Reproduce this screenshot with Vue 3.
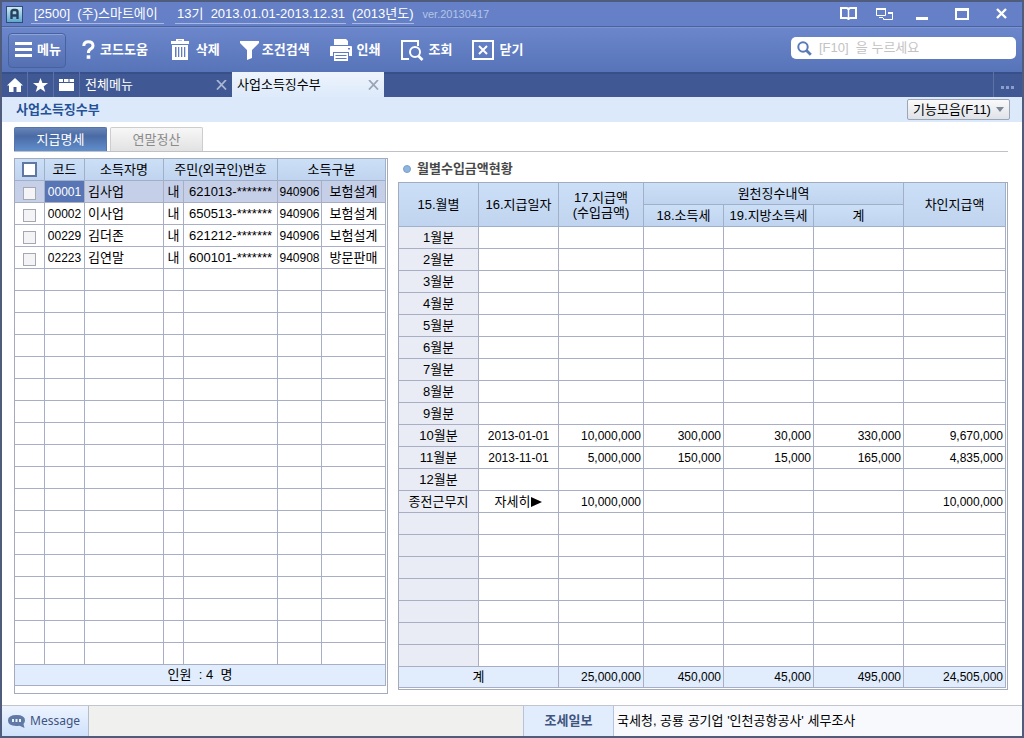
<script setup>
import { ref } from 'vue'

const keyword = ref('')
const allChecked = ref(false)

const people = ref([
  { code: '00001', name: '김사업', kind: '내', id: '621013-*******', type: '940906', label: '보험설계', checked: false },
  { code: '00002', name: '이사업', kind: '내', id: '650513-*******', type: '940906', label: '보험설계', checked: false },
  { code: '00229', name: '김더존', kind: '내', id: '621212-*******', type: '940906', label: '보험설계', checked: false },
  { code: '02223', name: '김연말', kind: '내', id: '600101-*******', type: '940908', label: '방문판매', checked: false },
])
const selected = ref('00001')
const emptyPeople = 18

const months = Array.from({ length: 9 }, (_, i) => ({ month: `${i + 1}월분`, date: '', values: ['', '', '', '', ''] }))
const payments = [
  ...months,
  { month: '10월분', date: '2013-01-01', values: ['10,000,000', '300,000', '30,000', '330,000', '9,670,000'] },
  { month: '11월분', date: '2013-11-01', values: ['5,000,000', '150,000', '15,000', '165,000', '4,835,000'] },
  { month: '12월분', date: '', values: ['', '', '', '', ''] },
  { month: '종전근무지', date: '', more: '자세히', values: ['10,000,000', '', '', '', '10,000,000'] },
  ...Array.from({ length: 7 }, () => ({ month: '', date: '', values: ['', '', '', '', ''] })),
]
const totals = ['25,000,000', '450,000', '45,000', '495,000', '24,505,000']
</script>

<template>
  <div class="window">
    <header class="titlebar">
      <svg class="app-icon" width="17" height="17" viewBox="0 0 17 17">
        <defs>
          <linearGradient id="appg" x1="0" y1="0" x2="0" y2="1">
            <stop offset="0" stop-color="#d3edf5" /><stop offset="1" stop-color="#5aa5cc" />
          </linearGradient>
        </defs>
        <rect x=".5" y=".5" width="16" height="16" fill="url(#appg)" stroke="#304c78" />
        <path d="M5.5 13V6q0-2 2-2h2q2 0 2 2v7M5.5 9.5h6" fill="none" stroke="#26405e" stroke-width="2.4" />
      </svg>
      <span class="title-text company">[2500]&nbsp; (주)스마트에이</span>
      <span class="title-text period">13기&nbsp; 2013.01.01-2013.12.31</span>
      <span class="title-text year">(2013년도)</span>
      <span class="version">ver.20130417</span>
      <div class="controls">
        <button type="button" aria-label="도움말">
          <svg width="17" height="14" viewBox="0 0 17 14" fill="none" stroke="#fff" stroke-width="2"><path d="M1 1h5.500Q8.500 1 8.500 3q0-2 2-2H16v10h-5.500q-2 0-2 1.500 0-1.500-2-1.500H1z" /><path d="M8.500 2v11" stroke-width="1.500" /></svg>
        </button>
        <button type="button" aria-label="창 배열">
          <svg width="17" height="13" viewBox="0 0 17 13" fill="none" stroke="#fff"><path d="M.5 1v6.500h9V1M3 9.500h4M12 5h4.500v6.500h-9V10" /><path d="M0 1h10M12 5h5" stroke-width="2" /></svg>
        </button>
        <button type="button" aria-label="최소화">
          <svg width="12" height="14" viewBox="0 0 12 14"><path d="M0 10h12v3H0z" fill="#fff" /></svg>
        </button>
        <button type="button" aria-label="최대화">
          <svg width="14" height="13" viewBox="0 0 14 13"><path d="M0 0h14v12H0zM2 3v7h10V3z" fill="#fff" fill-rule="evenodd" /></svg>
        </button>
        <button type="button" aria-label="창 닫기">
          <svg width="11" height="12" viewBox="0 0 11 12"><path d="M1 1l9 9M10 1l-9 9" stroke="#fff" stroke-width="2.400" /></svg>
        </button>
      </div>
    </header>

    <div class="toolbar">
      <button type="button" class="tool menu">
        <svg width="17" height="16" viewBox="0 0 17 16" fill="#fff"><path d="M0 0h17v3H0zM0 6h17v3H0zM0 12h17v3H0z" /></svg>메뉴
      </button>
      <button type="button" class="tool help">
        <svg width="13" height="21" viewBox="0 0 13 21" fill="none"><path d="M1.800 6Q1.800 1.800 6.300 1.800T11 5.600Q11 8 8.500 9.200 6.400 10.300 6.400 13" stroke="#fff" stroke-width="3" /><path d="M4.700 15.300h3.600v3.500H4.700z" fill="#fff" /></svg>코드도움
      </button>
      <button type="button" class="tool wide">
        <svg width="18" height="22" viewBox="0 0 18 22"><path d="M0 2h5V0h8v2h5v3H0zM7 1.500V2h4v-.5zM1 6h16v15H1zM4 8v10h1.500V8zM7 8v10h1.300V8zM10 8v10h1.300V8zM13 8v10h1.300V8z" fill="#fff" fill-rule="evenodd" /></svg>삭제
      </button>
      <button type="button" class="tool tight">
        <svg width="19" height="19" viewBox="0 0 19 19"><path d="M0 0h19v2l-7 7v8l-5 2V9L0 2z" fill="#fff" /></svg>조건검색
      </button>
      <button type="button" class="tool">
        <svg width="22" height="23" viewBox="0 0 22 23"><path d="M4 0h12l2 2v4H4zM0 8q0-1 1-1h20q1 0 1 1v9h-3v-4H3v4H0zM18 9h2v1.500h-2zM4 14h14v8H4zM5.500 16v1h11v-1zM5.500 19v1h11v-1z" fill="#fff" fill-rule="evenodd" /></svg>인쇄
      </button>
      <button type="button" class="tool">
        <svg width="23" height="21" viewBox="0 0 23 21" fill="none" stroke="#fff" stroke-width="2"><path d="M8 19H1V1h16v5" /><circle cx="14" cy="12" r="5" /><path d="M17.500 16l4 4" stroke-width="2.600" /></svg>조회
      </button>
      <button type="button" class="tool">
        <svg width="22" height="21" viewBox="0 0 22 21" fill="none" stroke="#fff" stroke-width="2"><path d="M1 1h20v18H1zM7 6l8 8M15 6l-8 8" /></svg>닫기
      </button>
      <label class="search">
        <svg width="15" height="15" viewBox="0 0 15 15" fill="none" stroke="#587bb8"><circle cx="6" cy="6" r="4.700" stroke-width="2" /><path d="M9.500 9.500l4.300 4.300" stroke-width="2.800" /></svg>
        <input v-model="keyword" type="text" placeholder="[F10]  을 누르세요" aria-label="검색" />
      </label>
    </div>

    <nav class="tabs">
      <button type="button" class="mini" aria-label="홈"><svg width="16" height="14" viewBox="0 0 16 14"><path d="M8 0l8 7.500h-2V14h-4.500V9h-3v5H2V7.500H0z" fill="#fff" /></svg></button>
      <button type="button" class="mini" aria-label="즐겨찾기"><svg width="15" height="14" viewBox="0 0 15 14"><path d="M7.500 0l1.900 5H15l-4.400 3.400L12.300 14 7.500 10.700 2.700 14l1.700-5.600L0 5h5.600z" fill="#fff" /></svg></button>
      <button type="button" class="mini" aria-label="메뉴함"><svg width="15" height="13" viewBox="0 0 15 13"><path d="M0 1h4v3H0zM5 1h4.500v3H5zM10.500 1H15v3h-4.500zM0 5h15v8H0z" fill="#fff" /></svg></button>
      <div class="tab">
        <a href="#all">전체메뉴</a>
        <button type="button" aria-label="전체메뉴 닫기"><svg width="11" height="10" viewBox="0 0 11 10"><path d="M1 0l9 9.500M10 0L1 9.500" stroke="#a9b6d4" stroke-width="1.800" /></svg></button>
      </div>
      <div class="tab current">
        <a href="#income">사업소득징수부</a>
        <button type="button" aria-label="사업소득징수부 닫기"><svg width="11" height="10" viewBox="0 0 11 10"><path d="M1 0l9 9.500M10 0L1 9.500" stroke="#98a3b3" stroke-width="1.800" /></svg></button>
      </div>
      <button type="button" class="more" aria-label="더 보기"><svg width="14" height="3" viewBox="0 0 14 3"><path d="M0 0h3v3H0zM5 0h3v3H5zM10 0h3v3h-3z" fill="#8b9ecb" /></svg></button>
    </nav>

    <div class="subhead">
      <h1>사업소득징수부</h1>
      <button type="button" class="functions">기능모음(F11)<svg width="8" height="5" viewBox="0 0 8 5"><path d="M0 0h8L4 5z" fill="#7d8796" /></svg></button>
    </div>

    <main class="content">
      <div class="views">
        <button type="button" class="view on">지급명세</button>
        <button type="button" class="view">연말정산</button>
      </div>

      <div class="panels">
        <section class="box people">
          <table>
            <colgroup><col class="w30" /><col class="w40" /><col class="w79" /><col class="w20" /><col class="w94" /><col class="w44" /><col class="w64" /></colgroup>
            <thead>
              <tr>
                <th><input v-model="allChecked" type="checkbox" class="check-all" aria-label="전체 선택" /></th>
                <th>코드</th><th>소득자명</th><th colspan="2">주민(외국인)번호</th><th colspan="2">소득구분</th>
              </tr>
            </thead>
            <tbody>
              <tr v-for="p in people" :key="p.code" :class="{ picked: p.code === selected }" @click="selected = p.code">
                <td class="tick"><input v-model="p.checked" type="checkbox" :aria-label="p.name" /></td>
                <td class="num code">{{ p.code }}</td>
                <td class="name">{{ p.name }}</td>
                <td>{{ p.kind }}</td>
                <td class="ident">{{ p.id }}</td>
                <td class="num">{{ p.type }}</td>
                <td>{{ p.label }}</td>
              </tr>
              <tr v-for="n in emptyPeople" :key="n"><td v-for="c in 7" :key="c"></td></tr>
            </tbody>
            <tfoot><tr><td colspan="7">인원&nbsp; : 4&nbsp; 명</td></tr></tfoot>
          </table>
        </section>

        <section class="monthly">
          <h2><i></i>월별수입금액현황</h2>
          <div class="box">
            <table>
              <colgroup><col class="w80" /><col class="w80" /><col class="w85" /><col class="w80" /><col class="w90" /><col class="w90" /><col class="w102" /></colgroup>
              <thead>
                <tr>
                  <th rowspan="2">15.월별</th><th rowspan="2">16.지급일자</th><th rowspan="2" class="two">17.지급액<br />(수입금액)</th>
                  <th colspan="3">원천징수내역</th><th rowspan="2">차인지급액</th>
                </tr>
                <tr><th>18.소득세</th><th>19.지방소득세</th><th>계</th></tr>
              </thead>
              <tbody>
                <tr v-for="(r, i) in payments" :key="i">
                  <th scope="row">{{ r.month }}</th>
                  <td v-if="r.more"><a href="#detail" class="detail">{{ r.more }}<svg width="11" height="10" viewBox="0 0 11 10"><path d="M0 0l11 5-11 5z" /></svg></a></td>
                  <td v-else class="num">{{ r.date }}</td>
                  <td v-for="(v, j) in r.values" :key="j" class="num amount">{{ v }}</td>
                </tr>
              </tbody>
              <tfoot>
                <tr><td colspan="2">계</td><td v-for="(t, i) in totals" :key="i" class="num amount">{{ t }}</td></tr>
              </tfoot>
            </table>
          </div>
        </section>
      </div>
    </main>

    <footer class="status">
      <button type="button" class="message">
        <svg width="17" height="13" viewBox="0 0 17 13"><path d="M8.500 0Q17 0 17 5.500q0 2-1.500 3.400L16.500 13l-5-2.300Q0 12 0 5.500 0 0 8.500 0z" fill="#6179a5" /><path d="M4 4h2v3H4zM7.500 4h2v3h-2zM11 4h2v3h-2z" fill="#e8f1ff" /></svg>Message
      </button>
      <div class="idle"></div>
      <a href="#news" class="paper">조세일보</a>
      <a href="#article" class="news">국세청, 공룡 공기업 '인천공항공사' 세무조사</a>
    </footer>
  </div>
</template>

<style>
body {
  margin: 0;
}
</style>

<style scoped>
* {
  box-sizing: border-box;
}
.window {
  display: flex;
  flex-direction: column;
  min-height: 100vh;
  border: 2px solid #4f5c7b;
  background: #fff;
  color: #000;
  font: 13px/16px "Liberation Sans", "Noto Sans CJK KR", sans-serif;
}
button,
input {
  margin: 0;
  padding: 0;
  border: 0;
  background: none;
  color: inherit;
  font: inherit;
}
a {
  color: inherit;
  text-decoration: none;
}
svg {
  display: block;
  flex: none;
}
.titlebar {
  display: flex;
  align-items: center;
  height: 25px;
  padding: 0 15px 0 4px;
  border-bottom: 1px solid #4763a4;
  background: #6580c6;
  color: #fff;
  white-space: nowrap;
}
.app-icon {
  margin-right: 8px;
}
.title-text {
  height: 20px;
  padding: 1px 2px;
  border-bottom: 1px solid #a7b8e2;
  line-height: 18px;
}
.company {
  width: 133px;
  margin-right: 11px;
  padding-left: 3px;
}
.period {
  width: 171px;
  margin-right: 6px;
}
.year {
  padding: 1px 0;
}
.version {
  margin-left: 9px;
  color: #b5c4e8;
  font-size: 11px;
}
.controls {
  display: flex;
  align-items: center;
  gap: 27px;
  margin-left: auto;
}
.controls button:first-child {
  margin-right: -8px;
}
.controls button:nth-child(2) {
  margin-right: -4px;
}
.toolbar {
  display: flex;
  align-items: center;
  gap: 20px;
  height: 45px;
  padding: 0 6px;
  border-top: 1px solid #8094cc;
  background: linear-gradient(#6b86cb, #5874b9);
  color: #fff;
}
.tool {
  display: flex;
  align-items: center;
  gap: 5px;
  font-weight: bold;
  white-space: nowrap;
}
.tool.wide {
  gap: 7px;
}
.tool.tight {
  gap: 3px;
}
.help {
  margin-right: 3px;
}
.menu {
  width: 58px;
  height: 35px;
  margin-right: -4px;
  padding-left: 6px;
  border: 1px solid #4862a0;
  border-radius: 4px;
  background: linear-gradient(#6a85c8, #5470b2);
  box-shadow: inset 0 1px #8fa4d7;
}
.search {
  display: flex;
  align-items: center;
  gap: 7px;
  width: 225px;
  height: 22px;
  margin: 0 0 4px auto;
  padding: 0 6px;
  border-radius: 5px;
  background: #fff;
}
.search input {
  flex: 1;
  min-width: 0;
  outline: 0;
  color: #333;
}
.search input::placeholder {
  color: #c3c3c3;
  opacity: 1;
}
.tabs {
  display: flex;
  height: 25px;
  background: #405994;
  box-shadow: inset 0 2px #38508a;
  color: #fff;
}
.mini {
  display: flex;
  align-items: center;
  justify-content: center;
  width: 26px;
  border-right: 1px solid #5b71a8;
}
.tab {
  display: flex;
  align-items: center;
  justify-content: space-between;
  width: 152px;
  padding: 0 5px;
}
.tab.current {
  background: linear-gradient(#eef4fd, #ddeafa);
  color: #000;
}
.more {
  display: flex;
  align-items: center;
  justify-content: center;
  width: 29px;
  margin-left: auto;
  padding-top: 6px;
  border-left: 1px solid #5b71a8;
}
.subhead {
  display: flex;
  align-items: center;
  justify-content: space-between;
  height: 25px;
  padding: 0 12px 0 14px;
  background: #dce9fa;
}
h1,
h2 {
  margin: 0;
  font-size: 13px;
  line-height: 16px;
}
h1 {
  color: #245197;
}
.functions {
  display: flex;
  align-items: center;
  justify-content: space-between;
  width: 103px;
  height: 21px;
  padding: 0 5px;
  border: 1px solid #9ca6b5;
  border-radius: 2px;
  background: linear-gradient(#fafafa, #dfe2e8);
}
.content {
  flex: 1;
  padding: 5px 14px 11px 12px;
}
.views {
  display: flex;
  gap: 3px;
  height: 25px;
  border-bottom: 1px solid #bfc1c6;
}
.view {
  width: 93px;
  height: 24px;
  border: 1px solid #cdcdcd;
  border-bottom: 0;
  border-radius: 2px 2px 0 0;
  background: linear-gradient(#f7f7f7, #e2e2e2);
  color: #8a8a8a;
}
.view.on {
  border-color: #5474ab;
  background: linear-gradient(#6785b7, #4a6aa4 35%, #608fcc);
  color: #fff;
}
.panels {
  display: grid;
  grid-template-columns: 374fr 610fr;
  gap: 10px;
  align-items: start;
  padding-top: 6px;
}
.box {
  padding: 0 1px 1px 0;
  border: 1px solid #a3abbd;
}
.people {
  padding-bottom: 7px;
}
.monthly h2 {
  display: flex;
  align-items: center;
  gap: 6px;
  height: 24px;
  padding: 0 5px 2px;
  color: #484848;
}
.monthly i {
  width: 8px;
  height: 8px;
  border: 1px solid #7aa0cd;
  border-radius: 50%;
  background: #8eb5dd;
}
table {
  width: 100%;
  table-layout: fixed;
  border-spacing: 0;
}
th,
td {
  height: 22px;
  padding: 0;
  overflow: hidden;
  border: solid #a8afc4;
  border-width: 0 1px 1px 0;
  font-weight: normal;
  line-height: 16px;
  text-align: center;
  vertical-align: middle;
  white-space: nowrap;
}
thead {
  background: #c6daf4;
}
thead th {
  border-color: #9fb0cb;
  background: linear-gradient(#cbdff7, #c0d4ef);
}
.two {
  line-height: 15px;
}
tbody th {
  background: #e9ecf5;
}
tfoot td {
  height: 21px;
  background: #e1edfc;
}
.num {
  font-size: 12px;
}
.amount {
  padding-right: 2px;
  text-align: right;
}
.name {
  padding-left: 3px;
  text-align: left;
}
.picked td {
  background: #c5cfe8;
}
.picked .code {
  background: #5876b5;
  color: #fff;
}
.detail {
  display: flex;
  align-items: center;
  justify-content: center;
  gap: 1px;
}
input[type="checkbox"] {
  display: block;
  width: 13px;
  height: 13px;
  margin: 4px auto 0;
  border: 1px solid #a4a8b0;
  background: #f4f4f6;
  appearance: none;
}
input.check-all {
  width: 15px;
  height: 15px;
  margin: 0 auto;
  border: 2px solid #6077a2;
  background: #fff;
}
input[type="checkbox"]:checked {
  background: #5876b5;
}
.w20 { width: 20px; }
.w30 { width: 30px; }
.w40 { width: 40px; }
.w44 { width: 44px; }
.w64 { width: 64px; }
.w79 { width: 79px; }
.w80 { width: 80px; }
.w85 { width: 85px; }
.w90 { width: 90px; }
.w94 { width: 94px; }
.w102 { width: 102px; }
.status {
  display: flex;
  height: 31px;
  border-top: 1px solid #c2c5cd;
}
.message {
  display: flex;
  align-items: center;
  gap: 5px;
  width: 87px;
  padding-left: 6px;
  border-right: 1px solid #b5bccb;
  background: linear-gradient(#edf4ff, #cfe1fb);
  color: #40537e;
  font: 12px/16px "Noto Sans", sans-serif;
}
.idle {
  flex: 1;
  background: #f0f0ee;
}
.paper {
  width: 91px;
  border: solid #b5c3db;
  border-width: 0 1px;
  background: #e1edfc;
  color: #40537e;
  font-weight: bold;
  line-height: 29px;
  text-align: center;
}
.news {
  width: 408px;
  padding-left: 3px;
  background: #f8f9fc;
  line-height: 29px;
}
</style>
